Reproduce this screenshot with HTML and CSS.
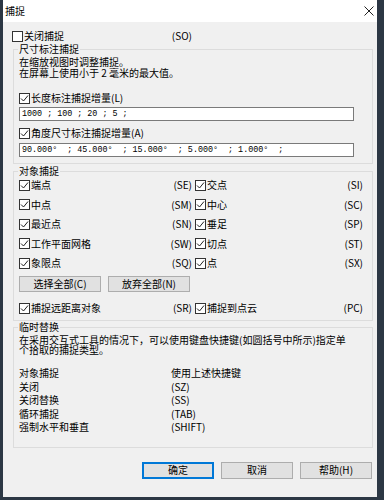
FILE: index.html
```html
<!DOCTYPE html>
<html lang="zh-CN">
<head>
  <meta charset="UTF-8">
  <meta name="viewport" content="width=device-width, initial-scale=1.0">
  <title>捕捉</title>
  <link rel="stylesheet" href="styles.css">
</head>
<body>
  <div class="win">
    <div class="titlebar">
      <span class="title">捕捉</span>
      <svg class="close" width="10" height="10" viewBox="0 0 10 10"><path d="M0.5 0.5 L9.5 9.5 M9.5 0.5 L0.5 9.5" stroke="#222" stroke-width="1"/></svg>
    </div>

    <div class="content">
      <div class="row so-row">
        <span class="cb"></span><span class="lbl">关闭捕捉</span>
        <span class="code">(SO)</span>
      </div>

      <fieldset class="group g1">
        <legend>尺寸标注捕捉</legend>
        <p class="note">在缩放视图时调整捕捉。<br>在屏幕上使用小于 2 毫米的最大值。</p>
        <div class="row check-row first">
          <span class="cb on"><svg width="9" height="9" viewBox="0 0 9 9"><path d="M1 4.5 L3.5 7 L8 1.5" fill="none" stroke="#222" stroke-width="1"/></svg></span>
          <span class="lbl">长度标注捕捉增量(L)</span>
        </div>
        <div class="field">1000 ; 100 ; 20 ; 5 ;</div>
        <div class="row check-row second">
          <span class="cb on"><svg width="9" height="9" viewBox="0 0 9 9"><path d="M1 4.5 L3.5 7 L8 1.5" fill="none" stroke="#222" stroke-width="1"/></svg></span>
          <span class="lbl">角度尺寸标注捕捉增量(A)</span>
        </div>
        <div class="field field2">90.000°  ; 45.000°  ; 15.000°  ; 5.000°  ; 1.000°  ;</div>
      </fieldset>

      <fieldset class="group g2">
        <legend>对象捕捉</legend>
        <div class="snap-grid">
          <div class="row item left"><span class="cb on"><svg width="9" height="9" viewBox="0 0 9 9"><path d="M1 4.5 L3.5 7 L8 1.5" fill="none" stroke="#222" stroke-width="1"/></svg></span><span class="lbl">端点</span><span class="code">(SE)</span></div>
          <div class="row item right"><span class="cb on"><svg width="9" height="9" viewBox="0 0 9 9"><path d="M1 4.5 L3.5 7 L8 1.5" fill="none" stroke="#222" stroke-width="1"/></svg></span><span class="lbl">交点</span><span class="code">(SI)</span></div>
          <div class="row item left"><span class="cb on"><svg width="9" height="9" viewBox="0 0 9 9"><path d="M1 4.5 L3.5 7 L8 1.5" fill="none" stroke="#222" stroke-width="1"/></svg></span><span class="lbl">中点</span><span class="code">(SM)</span></div>
          <div class="row item right"><span class="cb on"><svg width="9" height="9" viewBox="0 0 9 9"><path d="M1 4.5 L3.5 7 L8 1.5" fill="none" stroke="#222" stroke-width="1"/></svg></span><span class="lbl">中心</span><span class="code">(SC)</span></div>
          <div class="row item left"><span class="cb on"><svg width="9" height="9" viewBox="0 0 9 9"><path d="M1 4.5 L3.5 7 L8 1.5" fill="none" stroke="#222" stroke-width="1"/></svg></span><span class="lbl">最近点</span><span class="code">(SN)</span></div>
          <div class="row item right"><span class="cb on"><svg width="9" height="9" viewBox="0 0 9 9"><path d="M1 4.5 L3.5 7 L8 1.5" fill="none" stroke="#222" stroke-width="1"/></svg></span><span class="lbl">垂足</span><span class="code">(SP)</span></div>
          <div class="row item left"><span class="cb on"><svg width="9" height="9" viewBox="0 0 9 9"><path d="M1 4.5 L3.5 7 L8 1.5" fill="none" stroke="#222" stroke-width="1"/></svg></span><span class="lbl">工作平面网格</span><span class="code">(SW)</span></div>
          <div class="row item right"><span class="cb on"><svg width="9" height="9" viewBox="0 0 9 9"><path d="M1 4.5 L3.5 7 L8 1.5" fill="none" stroke="#222" stroke-width="1"/></svg></span><span class="lbl">切点</span><span class="code">(ST)</span></div>
          <div class="row item left"><span class="cb on"><svg width="9" height="9" viewBox="0 0 9 9"><path d="M1 4.5 L3.5 7 L8 1.5" fill="none" stroke="#222" stroke-width="1"/></svg></span><span class="lbl">象限点</span><span class="code">(SQ)</span></div>
          <div class="row item right"><span class="cb on"><svg width="9" height="9" viewBox="0 0 9 9"><path d="M1 4.5 L3.5 7 L8 1.5" fill="none" stroke="#222" stroke-width="1"/></svg></span><span class="lbl">点</span><span class="code">(SX)</span></div>
        </div>
        <div class="btn-row">
          <button class="btn sel">选择全部(C)</button>
          <button class="btn sel">放弃全部(N)</button>
        </div>
        <div class="snap-grid far">
          <div class="row item left"><span class="cb on"><svg width="9" height="9" viewBox="0 0 9 9"><path d="M1 4.5 L3.5 7 L8 1.5" fill="none" stroke="#222" stroke-width="1"/></svg></span><span class="lbl">捕捉远距离对象</span><span class="code">(SR)</span></div>
          <div class="row item right"><span class="cb on"><svg width="9" height="9" viewBox="0 0 9 9"><path d="M1 4.5 L3.5 7 L8 1.5" fill="none" stroke="#222" stroke-width="1"/></svg></span><span class="lbl">捕捉到点云</span><span class="code">(PC)</span></div>
        </div>
      </fieldset>

      <fieldset class="group g3">
        <legend>临时替换</legend>
        <p class="note">在采用交互式工具的情况下，可以使用键盘快捷键(如圆括号中所示)指定单<br>个拾取的捕捉类型。</p>
        <div class="keys">
          <span>对象捕捉</span><span>使用上述快捷键</span>
          <span>关闭</span><span>(SZ)</span>
          <span>关闭替换</span><span>(SS)</span>
          <span>循环捕捉</span><span>(TAB)</span>
          <span>强制水平和垂直</span><span>(SHIFT)</span>
        </div>
      </fieldset>

      <div class="footer">
        <button class="btn main">确定</button>
        <button class="btn">取消</button>
        <button class="btn">帮助(H)</button>
      </div>
    </div>
  </div>
</body>
</html>
```

FILE: styles.css
```css
body {
  margin: 0;
  background: #2c3744;
  font-family: "Noto Sans CJK SC", "Noto Sans", sans-serif;
  font-size: 10px;
  color: #000;
}
.win {
  margin-left: 3px;
  width: 374px;
  height: 497px;
  background: #f0f0f0;
}
.titlebar {
  height: 22px;
  background: #fff;
  display: flex;
  align-items: center;
  justify-content: space-between;
  padding: 0 3px 0 2px;
}
.title {
  line-height: 10px;
}
.content {
  padding: 0 4px 0 10px;
}
.row {
  display: flex;
  align-items: center;
  height: 14px;
  line-height: 10px;
}
.cb {
  width: 9px;
  height: 9px;
  border: 1px solid #333;
  background: #fff;
  display: flex;
  margin-right: 1px;
  flex: none;
}
.so-row {
  margin-top: 7px;
  margin-left: -1px;
  width: 180px;
}
.code {
  margin-left: auto;
}
.group {
  margin: 0;
  padding: 0 0 0 5px;
  border: 1px solid #dcdcdc;
  min-width: 0;
}
.group legend {
  padding: 0 1px;
  margin-left: -1px;
  line-height: 10px;
}
.g1 {
  margin-top: 1px;
  padding-bottom: 6px;
}
.note {
  margin: 2px 0 0;
  line-height: 11px;
}
.check-row.first {
  margin-top: 13px;
}
.check-row.second {
  margin-top: 5px;
}
.field {
  margin-top: 2px;
  width: 331px;
  height: 12px;
  border: 1px solid #7a7a7a;
  background: #fff;
  font-family: "Liberation Mono", monospace;
  font-size: 8.4px;
  line-height: 12px;
  padding-left: 2px;
  white-space: pre;
}
.field2 {
  margin-top: 3px;
}
.g2 {
  margin-top: 2px;
  padding-bottom: 5px;
}
.snap-grid {
  display: grid;
  grid-template-columns: 176px 1fr;
  grid-auto-rows: 14px;
  row-gap: 5.5px;
  margin-top: 2px;
}
.item.left {
  padding-right: 3px;
}
.item.right {
  padding-right: 9px;
}
.btn-row {
  display: flex;
  gap: 7px;
  margin-top: 6px;
}
.btn {
  height: 16px;
  padding: 0;
  border: 1px solid #adadad;
  background: #e1e1e1;
  font-family: inherit;
  font-size: 10px;
  line-height: 10px;
  color: #000;
}
.btn.sel {
  width: 82px;
}
.snap-grid.far {
  margin-top: 9px;
}
.g3 {
  margin-top: 1px;
  padding-bottom: 13px;
}
.g3 .note {
  margin-top: 3px;
  line-height: 10px;
}
.keys {
  display: grid;
  grid-template-columns: 152px 1fr;
  line-height: 13.5px;
  margin-top: 11px;
}
.footer {
  display: flex;
  justify-content: flex-end;
  gap: 7px;
  margin-top: 14px;
  padding-right: 1px;
}
.footer .btn {
  width: 72px;
  height: 17px;
}
.btn.main {
  border-color: #0078d7;
  box-shadow: inset 0 0 0 1px #0078d7;
}
```
